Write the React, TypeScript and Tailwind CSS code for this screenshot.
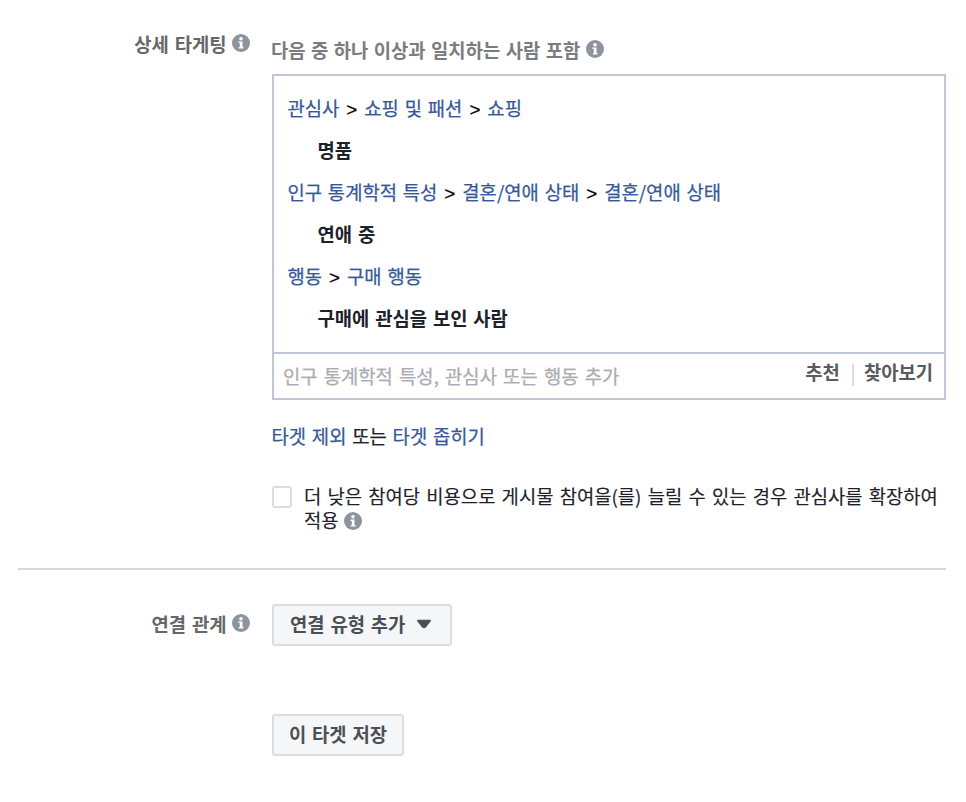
import type { ReactNode } from "react"

const targetingGroups = [
  { path: ["관심사", "쇼핑 및 패션", "쇼핑"], value: "명품" },
  { path: ["인구 통계학적 특성", "결혼/연애 상태", "결혼/연애 상태"], value: "연애 중" },
  { path: ["행동", "구매 행동"], value: "구매에 관심을 보인 사람" },
]

function InfoIcon({ className = "" }: { className?: string }) {
  return (
    <svg viewBox="0 0 18 18" className={`size-[18px] shrink-0 ${className}`}>
      <circle cx="9" cy="9" r="9" fill="#8d949e" />
      <circle cx="9" cy="4.7" r="1.8" fill="#fff" />
      <path d="M6.5 7.400h4v5.600h1v1.600H6.800V13h1V9H6.500z" fill="#fff" />
    </svg>
  )
}

function FormRow({ label, labelClass = "", children }: { label?: string; labelClass?: string; children: ReactNode }) {
  return (
    <div className="flex">
      <div className={`flex w-[272px] shrink-0 justify-end pr-[22px] ${labelClass}`}>
        {label && (
          <div className="flex h-6 items-center gap-[5.5px] font-bold text-[#666769]">
            <span>{label}</span>
            <InfoIcon className="-mt-0.5" />
          </div>
        )}
      </div>
      <div className="w-[674px] shrink-0">{children}</div>
    </div>
  )
}

function Breadcrumb({ path }: { path: string[] }) {
  return (
    <div className="flex h-[42px] items-center [-webkit-text-stroke:0.25px]">
      {path.map((part, index) => (
        <span key={index} className="flex items-center">
          {index > 0 && (
            <span className="w-[25px] pt-1 text-center font-['Liberation_Sans',sans-serif] text-black">&gt;</span>
          )}
          <a href="#" className="text-[#365899]">
            {part}
          </a>
        </span>
      ))}
    </div>
  )
}

export default function App() {
  return (
    <div className="h-[802px] w-[966px] overflow-hidden bg-white font-['Noto_Sans_CJK_KR',sans-serif] text-[18.8px] leading-6 whitespace-nowrap text-[#1d2129] [word-spacing:1.6px]">
      <div className="pt-8">
        <FormRow label="상세 타게팅">
          <div className="flex h-[42px] items-center gap-1.5 pb-2 pt-0.5 font-bold text-[#7a7c80] [word-spacing:1.2px]">
            <span className="-ml-px">다음 중 하나 이상과 일치하는 사람 포함</span>
            <InfoIcon className="-mt-0.5" />
          </div>

          <div className="h-[326px] border-2 border-[#bdc7d8]">
            <div className="h-[278px] border-b-2 border-[#bdc7d8] pt-[11px] pl-[13.5px]">
              {targetingGroups.map((group) => (
                <div key={group.value}>
                  <Breadcrumb path={group.path} />
                  <div className="flex h-[42px] items-center pl-[30px] font-bold">{group.value}</div>
                </div>
              ))}
            </div>
            <div className="flex h-11 items-center justify-between pr-[11px] pl-[9px]">
              <span className="text-[#a9acb0] [word-spacing:2px] [-webkit-text-stroke:0.25px]">
                인구 통계학적 특성, 관심사 또는 행동 추가
              </span>
              <div className="flex items-center pb-2 font-bold text-[#5a5b5d]">
                <span>추천</span>
                <span className="mr-[10px] ml-3 mt-1.5 h-[22px] w-0.5 bg-[#dcdcdc]" />
                <span>찾아보기</span>
              </div>
            </div>
          </div>

          <div className="mt-6 -ml-[0.5px] [-webkit-text-stroke:0.25px]">
            <a href="#" className="text-[#365899]">타겟 제외</a> 또는{" "}
            <a href="#" className="text-[#365899]">타겟 좁히기</a>
          </div>

          <label className="mt-9 flex items-start">
            <input
              type="checkbox"
              className="mt-0.5 h-[22px] w-5 shrink-0 appearance-none rounded-[3px] border-2 border-[#dadde1] bg-white"
            />
            <span className="ml-3 w-[642px] whitespace-normal [word-spacing:2px] [-webkit-text-stroke:0.15px]">
              더 낮은 참여당 비용으로 게시물 참여을(를) 늘릴 수 있는 경우 관심사를 확장하여 적용
              <InfoIcon className="-mt-1 ml-[5px] inline-block" />
            </span>
          </label>
        </FormRow>
      </div>

      <hr className="mt-9 mr-5 ml-[18px] border-t-2 border-[#d8d8d8]" />

      <div className="mt-[34px]">
        <FormRow label="연결 관계" labelClass="pt-2">
          <button className="flex h-[42px] w-[180px] items-center rounded-[3px] border-2 border-[#dadde1] bg-[#f5f6f7] pb-0.5 pl-4 font-bold text-[#4b4f56] [word-spacing:1.6px]">
            연결 유형 추가
            <svg viewBox="0 0 14 10" className="ml-3 h-2.5 w-3.5" fill="#4b4f56">
              <path d="M1 .8h12c.9 0 1.300 1 .6 1.700L8.800 8.600c-1 1-2.600 1-3.600 0L.4 2.500C-.3 1.800.1.8 1 .8z" />
            </svg>
          </button>
        </FormRow>
      </div>

      <div className="mt-[68px]">
        <FormRow>
          <button className="flex h-[42px] w-[132px] items-center justify-center rounded-[3px] border-2 border-[#dadde1] bg-[#f5f6f7] pb-0.5 font-bold text-[#4b4f56] [word-spacing:1.6px]">
            이 타겟 저장
          </button>
        </FormRow>
      </div>
    </div>
  )
}
